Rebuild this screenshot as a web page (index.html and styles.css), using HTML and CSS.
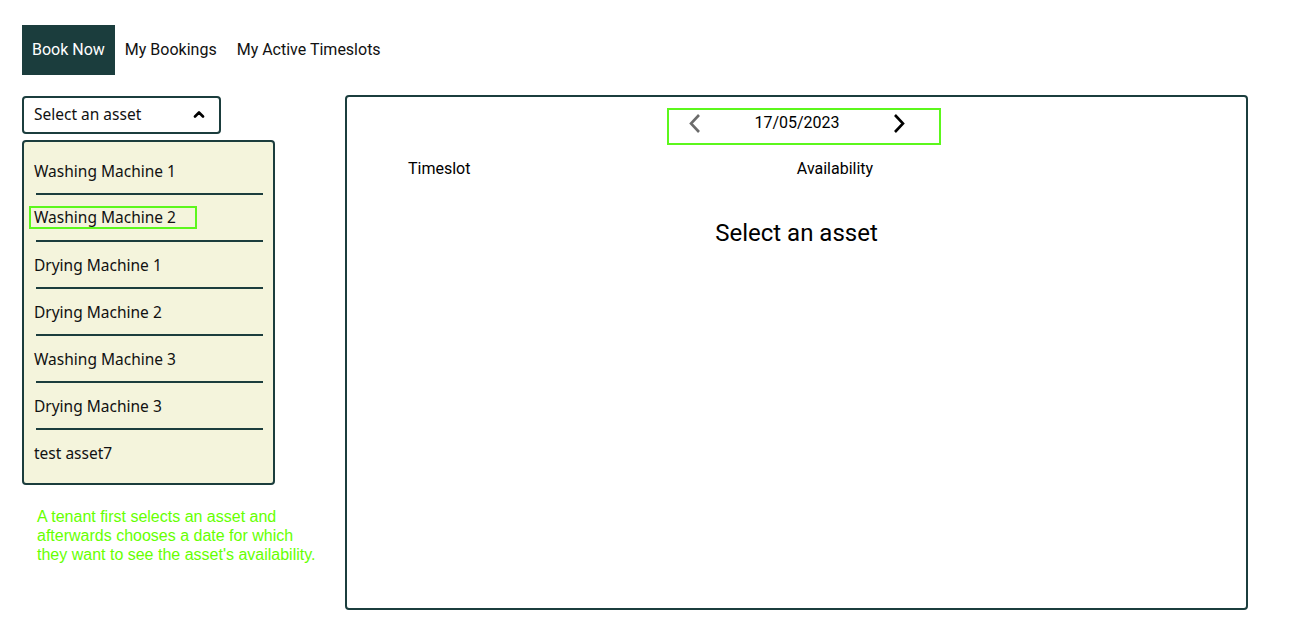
FILE: index.html
```html
<!DOCTYPE html>
<html>
<head>
<meta charset="utf-8">
<link rel="stylesheet" href="styles.css">
</head>
<body>
<nav class="nav">
  <a class="tab active">Book Now</a>
  <a class="tab">My Bookings</a>
  <a class="tab">My Active Timeslots</a>
</nav>
<div class="content">
  <aside class="side">
    <div class="select">
      <span>Select an asset</span>
      <svg class="caret" width="12" height="8" viewBox="0 0 12 8"><polyline points="2,6.5 6,2.5 10,6.5" fill="none" stroke="#000" stroke-width="2.6" stroke-linecap="round" stroke-linejoin="round"/></svg>
    </div>
    <ul class="list">
      <li class="item">Washing Machine 1</li>
      <li class="sep"></li>
      <li class="item"><span class="hl">Washing Machine 2</span></li>
      <li class="sep"></li>
      <li class="item">Drying Machine 1</li>
      <li class="sep"></li>
      <li class="item">Drying Machine 2</li>
      <li class="sep"></li>
      <li class="item">Washing Machine 3</li>
      <li class="sep"></li>
      <li class="item">Drying Machine 3</li>
      <li class="sep"></li>
      <li class="item">test asset7</li>
    </ul>
    <p class="note">A tenant first selects an asset and afterwards chooses a date for which they want to see the asset's availability.</p>
  </aside>
  <main class="panel">
    <div class="datebox">
      <span class="slot left"><svg width="14" height="21" viewBox="0 0 14 21"><polyline points="11,2 3,10.5 11,19" fill="none" stroke="#6b6b6b" stroke-width="2.6"/></svg></span>
      <span class="date">17/05/2023</span>
      <span class="slot right"><svg width="14" height="21" viewBox="0 0 14 21"><polyline points="3,2 11,10.5 3,19" fill="none" stroke="#000" stroke-width="2.6"/></svg></span>
    </div>
    <div class="heads">
      <span class="h-time">Timeslot</span>
      <span class="h-avail">Availability</span>
    </div>
    <div class="empty">Select an asset</div>
  </main>
</div>
</body>
</html>
```
FILE: styles.css
```css
* { box-sizing: border-box; }
body {
  margin: 0;
  padding: 25px 0 0 22px;
  font-family: Roboto, "Liberation Sans", sans-serif;
  font-size: 16px;
  color: #000;
  background: #fff;
}
.nav {
  display: flex;
  height: 50px;
}
.tab {
  display: flex;
  align-items: center;
  padding: 0 10px 2px;
  color: #111;
  cursor: pointer;
}
.tab.active {
  background: #1b3d3d;
  color: #fff;
}
.content {
  display: flex;
  gap: 70px;
  margin-top: 20px;
}
.side {
  width: 253px;
  flex: none;
  padding-top: 1px;
}
.select {
  width: 199px;
  height: 38px;
  border: 2px solid #1b3d3d;
  border-radius: 4px;
  display: flex;
  align-items: center;
  justify-content: space-between;
  padding: 0 14px 2px 10px;
  font-family: "Noto Sans", sans-serif;
  font-size: 15.5px;
  color: #111;
}
.list {
  list-style: none;
  margin: 6px 0 0;
  padding: 6px 0 8px;
  background: #f4f4dc;
  border: 2px solid #1b3d3d;
  border-radius: 4px;
  font-family: "Noto Sans", sans-serif;
  font-size: 15.5px;
  color: #111;
}
.item {
  height: 45px;
  display: flex;
  align-items: center;
  padding-left: 10px;
}
.sep {
  height: 2px;
  background: #1b3d3d;
  margin: 0 10px 0 12px;
}
.hl {
  display: inline-block;
  width: 168px;
  margin-left: -5px;
  padding: 0 3px;
  line-height: 19px;
  border: 2px solid #5cf71c;
}
.note {
  width: 283px;
  margin: 22px 0 0 15px;
  font-family: "Liberation Sans", Arial, sans-serif;
  font-size: 16px;
  line-height: 19px;
  color: #66ff00;
}
.panel {
  width: 903px;
  height: 515px;
  border: 2px solid #1b3d3d;
  border-radius: 4px;
  flex: none;
}
.datebox {
  width: 274px;
  height: 37px;
  margin: 11px 0 0 320px;
  border: 2px solid #5cf71c;
  display: flex;
  align-items: flex-start;
  padding-top: 1px;
}
.slot {
  display: flex;
  justify-content: center;
  align-items: center;
  height: 24px;
}
.slot.left { width: 52px; }
.slot.right { width: 51px; }
.date {
  width: 152px;
  text-align: center;
  line-height: 24px;
}
.heads {
  display: flex;
  margin-top: 12px;
  padding-left: 61px;
  line-height: 24px;
}
.h-time { width: 350px; }
.h-avail { width: 154px; text-align: center; }
.empty {
  margin-top: 38px;
  text-align: center;
  font-size: 24px;
  line-height: 28px;
}
```
